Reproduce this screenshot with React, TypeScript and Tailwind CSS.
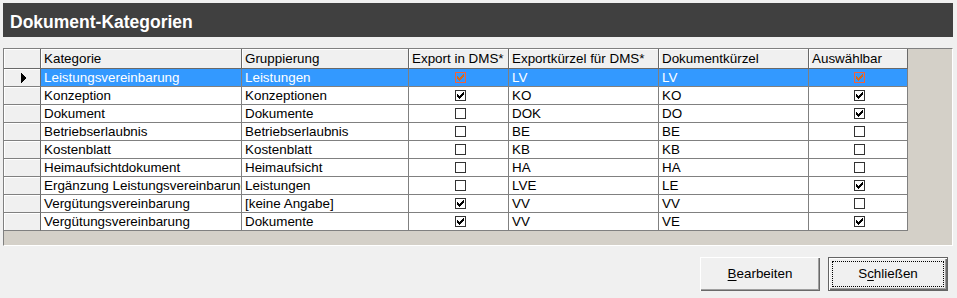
import React from 'react';

interface Row {
  kategorie: string;
  gruppe: string;
  export: boolean;
  exportKz: string;
  dokKz: string;
  auswaehlbar: boolean;
}

const ROWS: Row[] = [
  { kategorie: 'Leistungsvereinbarung', gruppe: 'Leistungen', export: true, exportKz: 'LV', dokKz: 'LV', auswaehlbar: true },
  { kategorie: 'Konzeption', gruppe: 'Konzeptionen', export: true, exportKz: 'KO', dokKz: 'KO', auswaehlbar: true },
  { kategorie: 'Dokument', gruppe: 'Dokumente', export: false, exportKz: 'DOK', dokKz: 'DO', auswaehlbar: true },
  { kategorie: 'Betriebserlaubnis', gruppe: 'Betriebserlaubnis', export: false, exportKz: 'BE', dokKz: 'BE', auswaehlbar: false },
  { kategorie: 'Kostenblatt', gruppe: 'Kostenblatt', export: false, exportKz: 'KB', dokKz: 'KB', auswaehlbar: false },
  { kategorie: 'Heimaufsichtdokument', gruppe: 'Heimaufsicht', export: false, exportKz: 'HA', dokKz: 'HA', auswaehlbar: false },
  { kategorie: 'Ergänzung Leistungsvereinbarung', gruppe: 'Leistungen', export: false, exportKz: 'LVE', dokKz: 'LE', auswaehlbar: true },
  { kategorie: 'Vergütungsvereinbarung', gruppe: '[keine Angabe]', export: true, exportKz: 'VV', dokKz: 'VV', auswaehlbar: false },
  { kategorie: 'Vergütungsvereinbarung', gruppe: 'Dokumente', export: true, exportKz: 'VV', dokKz: 'VE', auswaehlbar: true },
];

// classic 7x7 tick, one 1x3 column per x step
const TICK_TOPS = [2, 3, 4, 3, 2, 1, 0];

function CheckBox({ checked, selected }: { checked: boolean; selected: boolean }) {
  const tick = selected ? '#d9691c' : '#000000';
  return (
    <div
      className={`w-[11px] h-[11px] shrink-0 border flex items-center justify-center ${
        selected ? 'border-[#f4623a] bg-[#3399ff]' : 'border-[#333333] bg-white'
      }`}
    >
      {checked && (
        <svg width="7" height="7" viewBox="0 0 7 7" shapeRendering="crispEdges" className="block">
          {TICK_TOPS.map((t, i) => (
            <rect key={i} x={i} y={t} width="1" height="3" fill={tick} />
          ))}
        </svg>
      )}
    </div>
  );
}

const headCell = 'h-[20px] shrink-0 border-r border-b border-[#696969] bg-[#f0f0f0] shadow-[inset_1px_1px_0_#ffffff] pl-[3px] leading-[20px] whitespace-nowrap overflow-hidden';
const cell = 'h-[18px] shrink-0 border-r border-b border-[#808080] pl-[3px] leading-[18px] whitespace-nowrap overflow-hidden';

export default function App() {
  return (
    <div
      className="w-[957px] h-[298px] bg-[#f0f0f0] pt-[3px] pl-[3px] flex flex-col text-[13.4px] text-black"
      style={{ fontFamily: '"Liberation Sans", Arial, sans-serif' }}
    >
      <div className="w-[950px] h-[34px] bg-[#404040] flex items-center pl-[7px] pt-[4px] text-white font-bold text-[17.5px]">
        Dokument-Kategorien
      </div>

      <div className="mt-[11px] w-[950px] h-[198px] border-t border-l border-t-[#808080] border-l-[#808080] border-r border-b border-r-white border-b-white bg-[#d4d0c8] flex flex-col">
        <div className="flex">
          <div className={`${headCell} w-[37px]`} />
          <div className={`${headCell} w-[201px]`}>Kategorie</div>
          <div className={`${headCell} w-[167px]`}>Gruppierung</div>
          <div className={`${headCell} w-[100px]`}>Export in DMS*</div>
          <div className={`${headCell} w-[150px]`}>Exportkürzel für DMS*</div>
          <div className={`${headCell} w-[150px]`}>Dokumentkürzel</div>
          <div className={`${headCell} w-[99px]`}>Auswählbar</div>
        </div>

        {ROWS.map((r, i) => {
          const sel = i === 0;
          const bg = sel ? 'bg-[#3399ff] text-white' : 'bg-white';
          return (
            <div key={i} className="flex">
              <div className="h-[18px] w-[37px] shrink-0 border-r border-b border-r-[#696969] border-b-[#808080] bg-[#f0f0f0] shadow-[inset_1px_1px_0_#ffffff] flex items-center pl-[17px]">
                {sel && (
                  <svg width="5" height="10" viewBox="0 0 5 10" shapeRendering="crispEdges">
                    <polygon points="0,0 5,5 0,10" fill="#000000" />
                  </svg>
                )}
              </div>
              <div className={`${cell} ${bg} w-[201px]`}>{r.kategorie}</div>
              <div className={`${cell} ${bg} w-[167px]`}>{r.gruppe}</div>
              <div className={`${cell} ${bg} w-[100px] flex items-center justify-center pl-0`}>
                <CheckBox checked={r.export} selected={sel} />
              </div>
              <div className={`${cell} ${bg} w-[150px]`}>{r.exportKz}</div>
              <div className={`${cell} ${bg} w-[150px]`}>{r.dokKz}</div>
              <div className={`${cell} ${bg} w-[99px] flex items-center justify-center pl-0`}>
                <CheckBox checked={r.auswaehlbar} selected={sel} />
              </div>
            </div>
          );
        })}
      </div>

      <div className="mt-[11px] flex justify-end gap-[8px] pr-[9px]">
        <button
          type="button"
          className="w-[120px] h-[34px] bg-[#f0f0f0] shadow-[inset_1px_1px_0_#ffffff,inset_-1px_-1px_0_#696969,inset_-2px_-2px_0_#a0a0a0] flex items-center justify-center"
        >
          <span><span className="underline underline-offset-2">B</span>earbeiten</span>
        </button>
        <button
          type="button"
          className="relative w-[120px] h-[34px] bg-[#f0f0f0] border border-[#646464] shadow-[inset_1px_1px_0_#ffffff,inset_-1px_-1px_0_#696969,inset_-2px_-2px_0_#a0a0a0] flex items-center justify-center"
        >
          <span>S<span className="underline underline-offset-2">c</span>hließen</span>
          <span className="absolute inset-[3px] border border-dotted border-black" />
        </button>
      </div>
    </div>
  );
}
